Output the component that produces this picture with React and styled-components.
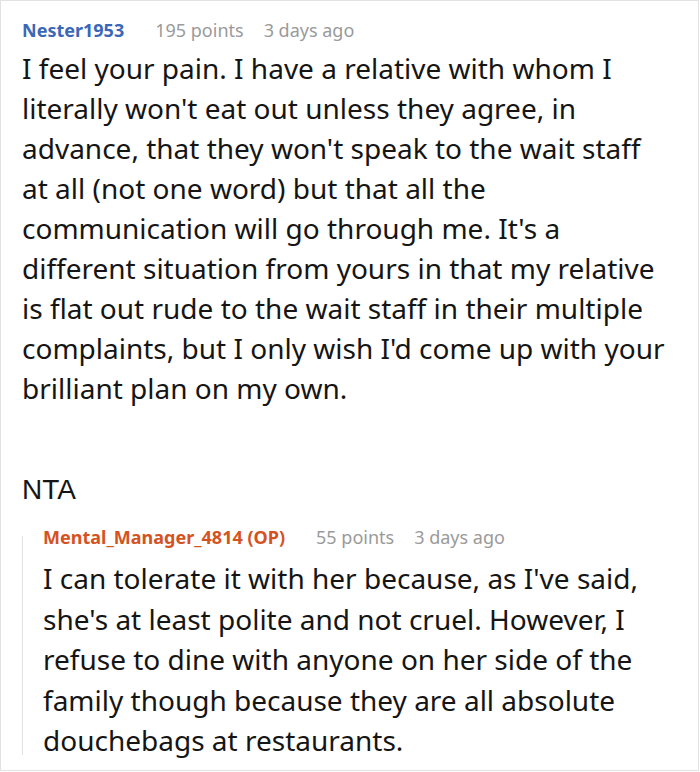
import React from "react";
import styled, { createGlobalStyle } from "styled-components";

const Global = createGlobalStyle`
  html, body { margin: 0; padding: 0; background: #fff; }
  body { font-family: "Noto Sans", "Open Sans", sans-serif; }
`;

const Frame = styled.div`
  box-sizing: border-box;
  width: 699px;
  height: 771px;
  border: 1px solid #e2e2e2;
  padding: 16px 28px 0 21px;
  overflow: hidden;
`;

const Header = styled.div`
  display: flex;
  align-items: baseline;
  gap: 20px;
  font-size: 18px;
  line-height: 26px;
  white-space: nowrap;
`;

const Author = styled.span`
  font-weight: 700;
  color: ${(p) => p.$color};
  margin-right: 11px;
`;

const Meta = styled.span`
  color: #9a9a9a;
`;

const Body = styled.p`
  margin: ${(p) => p.$top || 5}px 0 0;
  font-size: 28px;
  line-height: ${(p) => p.$lh || 40}px;
  color: #151515;
`;

const Verdict = styled.p`
  margin: 62px 0 0;
  font-family: "Liberation Sans", Arial, sans-serif;
  font-size: 28px;
  line-height: 40px;
  color: #151515;
`;

const Reply = styled.div`
  position: relative;
  margin-top: 14px;
  padding-left: 21px;

  &::before {
    content: "";
    position: absolute;
    left: 0;
    top: 12px;
    bottom: 6px;
    width: 1px;
    background: #e2e2e2;
  }
`;

export default function App() {
  return (
    <>
      <Global />
      <Frame>
        <Header>
          <Author $color="#3a67b8">Nester1953</Author>
          <Meta>195 points</Meta>
          <Meta>3 days ago</Meta>
        </Header>
        <Body>
          I feel your pain. I have a relative with whom I literally won't eat out unless they agree, in advance, that they won't speak to the wait staff at all (not one word) but that all the communication will go through me. It's a different situation from yours in that my relative is flat out rude to the wait staff in their multiple complaints, but I only wish I'd come up with your brilliant plan on my own.
        </Body>
        <Verdict>NTA</Verdict>
        <Reply>
          <Header>
            <Author $color="#d4531f">Mental_Manager_4814 (OP)</Author>
            <Meta>55 points</Meta>
            <Meta>3 days ago</Meta>
          </Header>
          <Body $top={8} $lh={40.5}>
            I can tolerate it with her because, as I've said, she's at least polite and not cruel. However, I refuse to dine with anyone on her side of the family though because they are all absolute douchebags at restaurants.
          </Body>
        </Reply>
      </Frame>
    </>
  );
}
